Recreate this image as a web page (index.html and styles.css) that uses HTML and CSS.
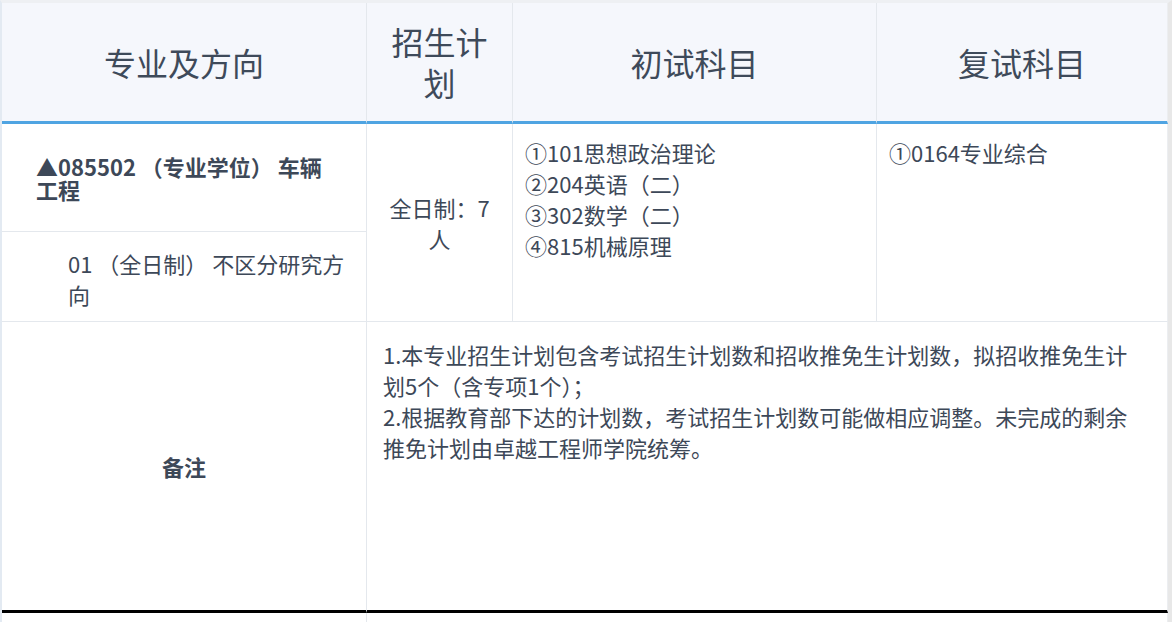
FILE: index.html
```html
<!DOCTYPE html>
<html lang="zh-CN">
<head>
<meta charset="utf-8">
<title>招生计划</title>
<link rel="stylesheet" href="styles.css">
</head>
<body>
<div class="page">
  <table class="plan">
    <colgroup>
      <col class="col-major">
      <col class="col-quota">
      <col class="col-first">
      <col class="col-second">
    </colgroup>
    <thead>
      <tr class="row-head">
        <th>专业及方向</th>
        <th>招生计划</th>
        <th>初试科目</th>
        <th class="last">复试科目</th>
      </tr>
    </thead>
    <tbody>
      <tr class="row-major">
        <td class="major">▲085502 （专业学位） 车辆工程</td>
        <td class="quota" rowspan="2">全日制：7 人</td>
        <td class="subjects" rowspan="2">①101思想政治理论<br>②204英语（二）<br>③302数学（二）<br>④815机械原理</td>
        <td class="subjects last" rowspan="2">①0164专业综合</td>
      </tr>
      <tr class="row-direction">
        <td class="direction">01 （全日制） 不区分研究方向</td>
      </tr>
      <tr class="row-note">
        <td class="note-label">备注</td>
        <td class="note last" colspan="3">1.本专业招生计划包含考试招生计划数和招收推免生计划数，拟招收推免生计划5个（含专项1个）；<br>2.根据教育部下达的计划数，考试招生计划数可能做相应调整。未完成的剩余推免计划由卓越工程师学院统筹。</td>
      </tr>
      <tr class="row-next">
        <td></td>
        <td class="last" colspan="3"></td>
      </tr>
    </tbody>
  </table>
</div>
</body>
</html>
```

FILE: styles.css
```css
html, body {
  margin: 0;
  padding: 0;
  background: #ffffff;
}

body {
  font-family: "Noto Sans CJK SC", "Noto Sans", sans-serif;
  color: #3d4858;
  overflow: hidden;
}

.page {
  height: 622px;
  box-sizing: border-box;
  border-top: 3px solid #eef0f3;
  border-left: 2px solid #e3eaf2;
  border-right: 4px solid #e8e8e8;
}

.plan {
  width: 100%;
  table-layout: fixed;
  border-collapse: separate;
  border-spacing: 0;
}

.col-major { width: 365px; }
.col-quota { width: 146px; }
.col-first { width: 364px; }
.col-second { width: 291px; }

.plan th,
.plan td {
  box-sizing: border-box;
  border-right: 1px solid #e4e8ed;
  border-bottom: 1px solid #e4e8ed;
  padding: 0;
}

.plan th.last,
.plan td.last {
  border-right: 1px solid #eceef1;
}

/* header */
.row-head {
  height: 121px;
}

.plan th {
  background: #f5f7fc;
  font-size: 32px;
  line-height: 41px;
  font-weight: 400;
  color: #3e4a5a;
  text-align: center;
  vertical-align: middle;
  padding: 0 16px;
  border-bottom: 3px solid #4fa4e2;
}

/* body cells */
.plan td {
  font-size: 22px;
  line-height: 31px;
  vertical-align: middle;
}

.row-major { height: 108px; }
.row-direction { height: 90px; }
.row-note { height: 291px; }
.row-next { height: 30px; }

.plan td.major {
  font-weight: 700;
  line-height: 23px;
  padding: 0 34px;
}

.plan td.direction {
  padding: 4px 12px 0 66px;
}

.plan td.quota {
  text-align: center;
  padding: 0 16px;
}

.plan td.subjects {
  vertical-align: top;
  padding: 13px 12px 0 12px;
}

.plan td.note-label {
  font-weight: 700;
  text-align: center;
}

.plan .row-note td {
  border-bottom: 3px solid #000000;
}

.plan td.note {
  vertical-align: top;
  padding: 17px 24px 0 16px;
}

.plan .row-next td {
  border-bottom: none;
}
```
